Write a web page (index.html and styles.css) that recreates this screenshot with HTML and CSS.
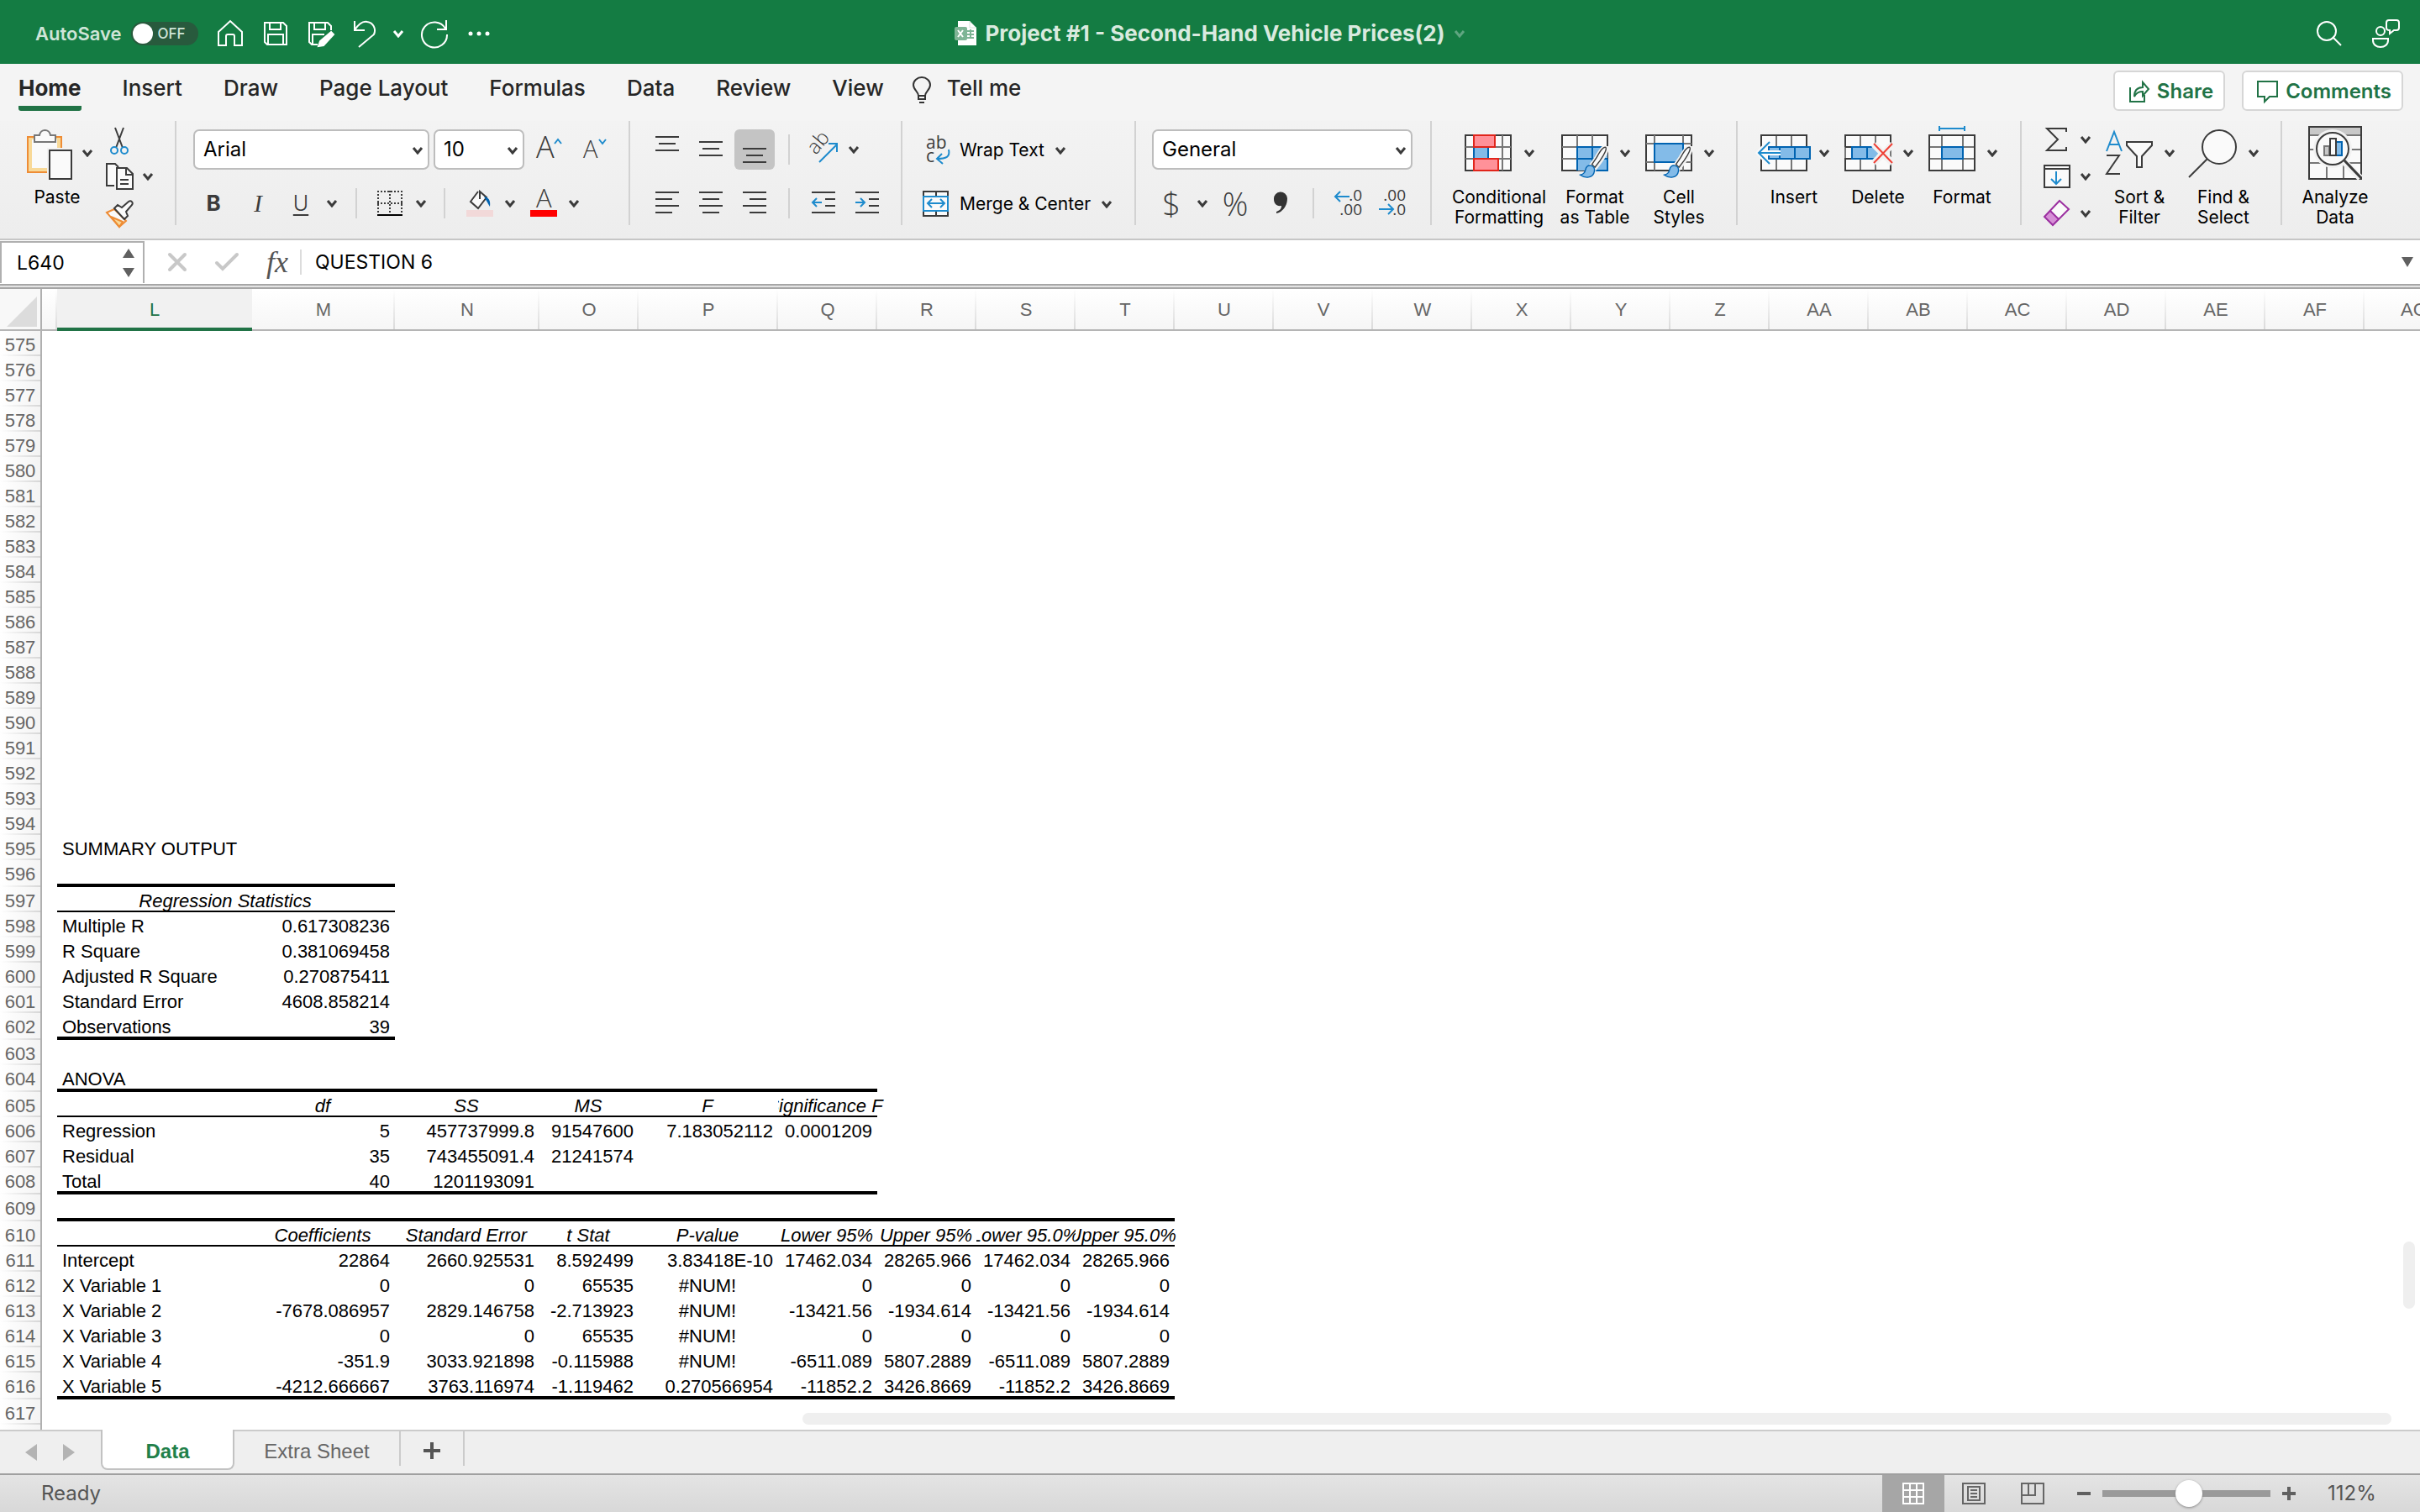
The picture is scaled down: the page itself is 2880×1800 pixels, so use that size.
FILE: index.html
```html
<!DOCTYPE html>
<html lang="en">
<head>
<meta charset="utf-8">
<meta name="viewport" content="width=device-width, initial-scale=1">
<title>Project #1 - Second-Hand Vehicle Prices(2)</title>
<link rel="stylesheet" href="styles.css">
</head>
<body>
<svg class="defs" aria-hidden="true">
  <symbol id="chev" viewBox="0 0 14 10"><path d="M2 2l5 6 5-6" fill="none" stroke="currentColor" stroke-width="3"/></symbol>
  <symbol id="brush" viewBox="0 0 48 60">
    <path d="M46 1c-3-2-9 6-16 18l-9 13 6 6 9-12C44 15 49 4 46 1z" fill="#fafafa" stroke="#f2f2f2" stroke-width="7"/>
    <path d="M45 2c-3-1-9 6-15 17l-8 12 5 5 9-12C43 14 48 4 45 2z" fill="#fafafa" stroke="#3b3b3b" stroke-width="2"/>
    <path d="M20 33c-5-1-8 2-9 7-1 6-4 8-9 9 8 6 22 6 24-6 1-5-1-9-6-10z" fill="#83bbe8" stroke="#0063b1" stroke-width="2"/>
  </symbol>
</svg>

<header class="titlebar">
  <div class="quick">
    <label class="autosave"><span>AutoSave</span><span class="toggle"><input type="checkbox" role="switch"><b>OFF</b></span></label>
    <button aria-label="Home"><svg width="32" height="32" viewBox="0 0 32 32"><path d="M2 14L16 1l14 13v16h-9V19c0-1-1-2-2-2h-6c-1 0-2 1-2 2v11H2z"/></svg></button>
    <button aria-label="Save"><svg width="32" height="32" viewBox="0 0 32 32"><path d="M3 3h22l4 4v22H6l-3-3zM9 3v8h13V3M7 29V17h18v12"/></svg></button>
    <button aria-label="Save as"><svg width="32" height="32" viewBox="0 0 32 32"><path d="M12 29H5l-3-3V3h22l4 4v5M8 3v8h13V3M6 29V17h14"/><path d="M28 14l3 3-12 13-6 1 2-6z" fill="#fff"/></svg></button>
    <button aria-label="Undo"><svg width="28" height="34" viewBox="0 0 28 34"><path d="M2 2v11h12M2 13C7 5 12 2 17 3c7 1 11 8 8 15L7 33"/></svg></button>
    <button class="more-undo" aria-label="Undo history"><svg width="14" height="10"><use href="#chev"/></svg></button>
    <button aria-label="Redo"><svg width="34" height="34" viewBox="0 0 34 34"><path d="M31 1v11H20M30 11A15 15 0 1 0 32 18"/></svg></button>
    <button aria-label="More"><svg width="28" height="8" viewBox="0 0 28 8"><g fill="#fff" stroke="none"><circle cx="4" cy="4" r="2.5"/><circle cx="14" cy="4" r="2.5"/><circle cx="24" cy="4" r="2.5"/></g></svg></button>
  </div>
  <button class="doc">
    <svg width="26" height="30" viewBox="0 0 26 30"><path d="M4 0h14l8 8v21H4z" fill="#fff" stroke="none"/><path d="M18 0v8h8" stroke="#d5e5da" stroke-width="1"/><path d="M15 12h8M15 16h8M15 20h8M19 10v11" stroke="#7fb596" stroke-width="2"/><rect y="7" width="15" height="16" rx="2" fill="#7fb596" stroke="none"/><path d="M4 11l6 8M10 11l-6 8" stroke="#fff"/></svg>
    <span>Project #1 - Second-Hand Vehicle Prices(2)</span>
    <svg class="dim" width="14" height="10"><use href="#chev"/></svg>
  </button>
  <div class="right">
    <button aria-label="Search"><svg width="32" height="32" viewBox="0 0 32 32"><circle cx="13" cy="13" r="11"/><path d="M20 20l10 10"/></svg></button>
    <button aria-label="Presence"><svg width="34" height="34" viewBox="0 0 34 34"><circle cx="11" cy="14" r="5"/><path d="M2 23h18v2c0 5-4 8-9 8s-9-3-9-8zM18 4c0-2 1-3 3-3h9c2 0 3 1 3 3v6c0 2-1 3-3 3h-3l-5 4v-4c-3 0-4-1-4-3z"/></svg></button>
  </div>
</header>

<nav class="tabs">
  <a href="#home" class="on">Home</a><a href="#insert">Insert</a><a href="#draw">Draw</a><a href="#layout">Page Layout</a><a href="#formulas">Formulas</a><a href="#data">Data</a><a href="#review">Review</a><a href="#view">View</a>
  <a href="#tell" class="tell"><svg width="24" height="32" viewBox="0 0 24 32"><path d="M8 23c0-5-6-7-6-13a10 9 0 0 1 20 0c0 6-6 8-6 13zM8 23v4h8v-4M9 31h6" fill="none" stroke="#333" stroke-width="2"/></svg>Tell me</a>
  <div class="actions">
    <button><svg width="26" height="28" viewBox="0 0 26 28"><path d="M2 9v17h17v-8M7 20c0-8 4-11 10-11V3l7 8-7 8v-5c-5 0-8 2-10 6z"/></svg>Share</button>
    <button><svg width="26" height="28" viewBox="0 0 26 28"><path d="M1 2h23v18H15l-6 6v-6H1z"/></svg>Comments</button>
  </div>
</nav>

<section class="ribbon" aria-label="Home tools">
  <div class="group clip">
    <button class="big"><span class="pic"><svg width="64" height="64" viewBox="0 0 64 64"><path d="M7 13h40v42H7z" fill="#f8d998" stroke="#ee8c35" stroke-width="2"/><path d="M12 16h30v34H12z" fill="#fafafa"/><path d="M15 19v-8h6c1-8 12-8 13 0h6v8z" fill="#fafafa" stroke="#777" stroke-width="2"/><path d="M30 26h32v38H30z" fill="#f2f2f2"/><path d="M33 29h26v34H33z" fill="#fafafa" stroke="#3b3b3b" stroke-width="2"/></svg><svg class="chev"><use href="#chev"/></svg></span>Paste</button>
    <div class="stack">
      <button aria-label="Cut"><svg width="36" height="36" viewBox="0 0 36 36"><path d="M13 4l9 24M23 4l-9 24" fill="none" stroke="#3b3b3b" stroke-width="2"/><g fill="none" stroke="#1e8bcd" stroke-width="2"><circle cx="12" cy="31" r="4"/><circle cx="24" cy="31" r="4"/></g></svg></button>
      <button aria-label="Copy"><svg width="36" height="36" viewBox="0 0 36 36"><g fill="#fafafa" stroke="#3b3b3b" stroke-width="2"><path d="M12 29H3V3h10l4 4"/><path d="M15 8h12l7 7v18H15z"/><path d="M26 8v8h8M19 22h10M19 27h10" fill="none"/></g></svg><svg class="chev"><use href="#chev"/></svg></button>
      <button aria-label="Format painter"><svg width="36" height="36" viewBox="0 0 36 36"><path d="M3 17l9-4 14 14-8 7z" fill="#fafafa" stroke="#ee8c35" stroke-width="2"/><path d="M8 22l14 6-4 6z" fill="#f8d998" stroke="#ee8c35" stroke-width="2"/><path d="M12 12l4-4 5 3 8-7c3-2 6 1 4 4l-7 8 2 5-4 4z" fill="#fafafa" stroke="#3b3b3b" stroke-width="2"/></svg></button>
    </div>
  </div>

  <div class="group font">
    <div class="row r1">
      <span class="drop family"><select aria-label="Font"><option>Arial</option></select><svg class="chev"><use href="#chev"/></svg></span>
      <span class="drop size"><select aria-label="Font size"><option>10</option></select><svg class="chev"><use href="#chev"/></svg></span>
      <button aria-label="Increase font size"><svg width="32" height="32" viewBox="0 0 32 32"><text x="0" y="26" font-size="36" class="glyph">A</text><path d="M22 9l4-5 4 5" fill="none" stroke="#1e8bcd" stroke-width="2"/></svg></button>
      <button aria-label="Decrease font size"><svg width="32" height="32" viewBox="0 0 32 32"><text x="2" y="26" font-size="29" class="glyph">A</text><path d="M21 4l4 5 4-5" fill="none" stroke="#1e8bcd" stroke-width="2"/></svg></button>
    </div>
    <div class="row r2">
      <button class="b">B</button><button class="i">I</button><button class="u">U</button><button aria-label="Underline style"><svg class="chev"><use href="#chev"/></svg></button><i class="sep"></i>
      <button aria-label="Borders"><svg width="32" height="32" viewBox="0 0 32 32"><path d="M1 2h30M1 16h30M2 1v28M30 1v28M16 1v28" fill="none" stroke="#3b3b3b" stroke-width="2" stroke-dasharray="2 2"/><path d="M1 30h30" stroke="#000" stroke-width="2"/></svg></button><button aria-label="Border style"><svg class="chev"><use href="#chev"/></svg></button><i class="sep"></i>
      <button aria-label="Fill color"><svg width="32" height="32" viewBox="0 0 32 32"><path d="M0 24h32v8H0z" fill="#f2d9d9"/><path d="M14 2L5 14l9 8 10-13-8-7v9" fill="#fafafa" stroke="#3b3b3b" stroke-width="2"/><path d="M21 8c6 1 8 5 7 12-3-5-4-7-7-12z" fill="#0063b1"/></svg></button><button aria-label="Fill colors"><svg class="chev"><use href="#chev"/></svg></button>
      <button aria-label="Font color"><svg width="32" height="32" viewBox="0 0 32 32"><text x="7" y="21" font-size="31" class="glyph">A</text><path d="M0 24h32v8H0z" fill="#f00"/></svg></button><button aria-label="Font colors"><svg class="chev"><use href="#chev"/></svg></button>
    </div>
  </div>

  <div class="group align">
    <div class="row r1">
      <button aria-label="Top align"><svg class="ln" viewBox="0 0 32 32"><path d="M2 1h28M6 9h20M2 17h28"/></svg></button>
      <button aria-label="Middle align"><svg class="ln" viewBox="0 0 32 32"><path d="M2 7h28M6 15h20M2 23h28"/></svg></button>
      <button aria-label="Bottom align" class="pressed"><svg class="ln" viewBox="0 0 32 32"><path d="M2 15h28M6 23h20M2 31h28"/></svg></button>
      <i class="sep"></i>
      <button aria-label="Orientation"><svg width="36" height="36" viewBox="0 0 36 36"><text x="9" y="25" font-size="24" class="glyph" transform="rotate(-50 9 25)">ab</text><path d="M13 33L34 12M24 11h10v10" fill="none" stroke="#1e8bcd" stroke-width="2"/></svg></button>
      <button aria-label="Orientation menu" class="nar"><svg class="chev"><use href="#chev"/></svg></button>
    </div>
    <div class="row r1">
      <button aria-label="Align left"><svg class="ln" viewBox="0 0 32 32"><path d="M2 3h28M2 11h20M2 19h28M2 27h20"/></svg></button>
      <button aria-label="Center"><svg class="ln" viewBox="0 0 32 32"><path d="M2 3h28M6 11h20M2 19h28M6 27h20"/></svg></button>
      <button aria-label="Align right"><svg class="ln" viewBox="0 0 32 32"><path d="M2 3h28M10 11h20M2 19h28M10 27h20"/></svg></button>
      <i class="sep"></i>
      <button aria-label="Decrease indent"><svg class="ln" viewBox="0 0 32 32"><path d="M2 3h28M18 11h12M18 19h12M2 27h28"/><path d="M14 15H3M8 10l-5 5 5 5" stroke="#1e8bcd"/></svg></button>
      <button aria-label="Increase indent"><svg class="ln" viewBox="0 0 32 32"><path d="M2 3h28M18 11h12M18 19h12M2 27h28"/><path d="M2 15h11M8 10l5 5-5 5" stroke="#1e8bcd"/></svg></button>
    </div>
  </div>

  <div class="group merge">
    <button class="row text"><svg width="32" height="32" viewBox="0 0 32 32"><text x="4" y="14" font-size="21" class="dec">ab</text><text x="4" y="30" font-size="21" class="dec">c</text><path d="M31 15c2 9-3 11-14 11M23 20l-6 6 7 6" fill="none" stroke="#1e8bcd" stroke-width="2"/></svg>Wrap Text<svg class="chev"><use href="#chev"/></svg></button>
    <button class="row text"><svg width="32" height="32" viewBox="0 0 32 32"><path d="M1 1h29v29H1zM16 1v6M16 24v6" fill="#fafafa" stroke="#3b3b3b" stroke-width="2"/><path d="M1 7h29v17H1zM6 15h20M11 10l-5 5 5 5M21 10l5 5-5 5" fill="#fafafa" stroke="#1e8bcd" stroke-width="2"/></svg>Merge &amp; Center<svg class="chev"><use href="#chev"/></svg></button>
  </div>

  <div class="group number">
    <div class="row"><span class="drop format"><select aria-label="Number format"><option>General</option></select><svg class="chev"><use href="#chev"/></svg></span></div>
    <div class="row r2">
      <button class="sym">$</button><button aria-label="Currencies"><svg class="chev"><use href="#chev"/></svg></button><button class="sym">%</button>
      <button aria-label="Comma style"><svg width="18" height="28" viewBox="0 0 18 28"><path d="M1 9a8 8 0 0 1 16-1c0 9-5 16-13 18v-2c5-2 6-4 6-7C4 18 1 14 1 9z" fill="#333"/></svg></button><i class="sep"></i>
      <button aria-label="Increase decimal"><svg width="36" height="36" viewBox="0 0 36 36"><text x="35" y="15" font-size="19" text-anchor="end" class="dec">.0</text><text x="35" y="32" font-size="19" text-anchor="end" class="dec">.00</text><path d="M20 10H3M9 4l-6 6 6 6" fill="none" stroke="#1e8bcd" stroke-width="2"/></svg></button>
      <button aria-label="Decrease decimal"><svg width="36" height="36" viewBox="0 0 36 36"><text x="35" y="15" font-size="19" text-anchor="end" class="dec">.00</text><text x="35" y="32" font-size="19" text-anchor="end" class="dec">.0</text><path d="M3 25h17M14 19l6 6-6 6" fill="none" stroke="#1e8bcd" stroke-width="2"/></svg></button>
    </div>
  </div>

  <div class="group styles">
    <button class="big cond"><span class="pic"><svg width="64" height="64" viewBox="0 0 64 64"><path d="M2 11h54v42H2z" fill="#fafafa" stroke="#3b3b3b" stroke-width="2"/><path d="M2 25h54M2 39h54M12 11v42M46 11v42" stroke="#777" stroke-width="2"/><path d="M12 25h17v14H12z" fill="#83bbe8" stroke="#0063b1" stroke-width="2"/><path d="M12 11h25v14H12zM12 39h29v14H12z" fill="#ff9199" stroke="#e1251b" stroke-width="2"/><path d="M30 26h15v12H30z" fill="#fafafa"/></svg><svg class="chev"><use href="#chev"/></svg></span>Conditional<br>Formatting</button>
    <button class="big fat"><span class="pic"><svg width="64" height="64" viewBox="0 0 64 64"><path d="M3 11h54v42H3z" fill="#fafafa" stroke="#3b3b3b" stroke-width="2"/><path d="M21 25h36v28H21z" fill="#83bbe8"/><path d="M3 25h18M3 39h18M21 11v14M39 11v14" stroke="#777" stroke-width="2"/><path d="M21 53V25h36M21 39h36M39 25v28M57 39v14H40" fill="none" stroke="#0063b1" stroke-width="2"/><use href="#brush" x="16" y="24" width="48" height="42"/></svg><svg class="chev"><use href="#chev"/></svg></span>Format<br>as Table</button>
    <button class="big cell"><span class="pic"><svg width="64" height="64" viewBox="0 0 64 64"><path d="M3 11h54v42H3z" fill="#fafafa" stroke="#3b3b3b" stroke-width="2"/><path d="M3 21h54M3 43h54M13 11v42M47 11v42" stroke="#777" stroke-width="2"/><path d="M13 21h34v22H13z" fill="#83bbe8" stroke="#0063b1" stroke-width="2"/><use href="#brush" x="16" y="24" width="48" height="42"/></svg><svg class="chev"><use href="#chev"/></svg></span>Cell<br>Styles</button>
  </div>

  <div class="group cells">
    <button class="big"><span class="pic"><svg width="64" height="64" viewBox="0 0 64 64"><path d="M3 11h54v42H3zM21 11v42M39 11v42" fill="#fafafa" stroke="#777" stroke-width="2"/><path d="M3 24V11h54v13M3 40v13h54V40" fill="none" stroke="#3b3b3b" stroke-width="2"/><path d="M12 25h49v14H12z" fill="#83bbe8" stroke="#0063b1" stroke-width="2"/><path d="M25 25v14M43 25v14" stroke="#0063b1" stroke-width="2"/><path d="M26 32H2M13 18L0 32l13 14" fill="none" stroke="#fafafa" stroke-width="6"/><path d="M26 32H1M13 19L0 32l13 13" fill="none" stroke="#1e8bcd" stroke-width="2"/></svg><svg class="chev"><use href="#chev"/></svg></span>Insert</button>
    <button class="big"><span class="pic"><svg width="64" height="64" viewBox="0 0 64 64"><path d="M3 11h54v42H3zM21 11v42M39 11v42" fill="#fafafa" stroke="#777" stroke-width="2"/><path d="M3 25V11h54v8M10 25H3M10 39H3v14h54v-6" fill="none" stroke="#3b3b3b" stroke-width="2"/><path d="M11 25h26l6 7-6 7H11z" fill="#83bbe8"/><path d="M38 25H11v14h27M29 25v14" fill="none" stroke="#0063b1" stroke-width="2"/><path d="M37 22l22 22M59 22L37 44" stroke="#f2f2f2" stroke-width="8"/><path d="M37 21l22 23M59 21L37 44" stroke="#ef4136" stroke-width="2"/></svg><svg class="chev"><use href="#chev"/></svg></span>Delete</button>
    <button class="big"><span class="pic"><svg width="64" height="64" viewBox="0 0 64 64"><path d="M3 11h54v42H3z" fill="#fafafa" stroke="#3b3b3b" stroke-width="2"/><path d="M4 25h52M4 39h52M18 12v40M43 12v40" stroke="#777" stroke-width="2"/><path d="M18 25h25v14H18z" fill="#83bbe8" stroke="#0063b1" stroke-width="2"/><path d="M15 3h30M15 0v6M45 0v6" stroke="#1e8bcd" stroke-width="2"/></svg><svg class="chev"><use href="#chev"/></svg></span>Format</button>
  </div>

  <div class="group edit">
    <div class="stack">
      <button aria-label="AutoSum"><svg width="36" height="36" viewBox="0 0 36 36"><path d="M29 9V5H6l13 13L6 31h23v-4" fill="none" stroke="#3b3b3b" stroke-width="2"/></svg><svg class="chev"><use href="#chev"/></svg></button>
      <button aria-label="Fill"><svg width="36" height="36" viewBox="0 0 36 36"><path d="M3 5h30v26H3zM3 9h30" fill="#fafafa" stroke="#3b3b3b" stroke-width="2"/><path d="M17 12v15M11 21l6 6 6-6" fill="none" stroke="#1e8bcd" stroke-width="2"/></svg><svg class="chev"><use href="#chev"/></svg></button>
      <button aria-label="Clear"><svg width="36" height="36" viewBox="0 0 36 36"><path d="M21 3l11 10-19 19L3 22z" fill="#fafafa"/><path d="M10 15l11 10-8 7L3 22z" fill="#d68fd6"/><path d="M21 3l11 10-19 19L3 22zM10 15l10 10" fill="none" stroke="#9b2fa0" stroke-width="2"/></svg><svg class="chev"><use href="#chev"/></svg></button>
    </div>
    <button class="big"><span class="pic"><svg width="64" height="64" viewBox="0 0 64 64"><path d="M3 30L12 7l9 23M6 22h12" fill="none" stroke="#1e8bcd" stroke-width="2"/><path d="M3 35h15L3 57h16" fill="none" stroke="#3b3b3b" stroke-width="2"/><path d="M27 19h30v4L45 36v13h-6V36L27 23z" fill="#fafafa" stroke="#3b3b3b" stroke-width="2"/></svg><svg class="chev"><use href="#chev"/></svg></span>Sort &amp;<br>Filter</button>
    <button class="big"><span class="pic"><svg width="64" height="64" viewBox="0 0 64 64"><circle cx="37" cy="25" r="20" fill="#fafafa" stroke="#3b3b3b" stroke-width="2"/><path d="M23 39L1 61" stroke="#3b3b3b" stroke-width="2"/></svg><svg class="chev"><use href="#chev"/></svg></span>Find &amp;<br>Select</button>
  </div>

  <div class="group analyze">
    <button class="big"><span class="pic"><svg width="64" height="64" viewBox="0 0 64 64"><path d="M1 1h62v62H1z" fill="#fafafa"/><path d="M2 2h60v8H2z" fill="#c8c8c8"/><path d="M1 11h62M1 28h62M1 44h62M22 44v19M42 44v19" stroke="#777" stroke-width="2"/><path d="M1 1h62v62H1z" fill="none" stroke="#3b3b3b" stroke-width="2"/><circle cx="29" cy="27" r="23" fill="#f2f2f2"/><path d="M42 42l20 20" stroke="#f2f2f2" stroke-width="8"/><circle cx="29" cy="27" r="19" fill="#fafafa" stroke="#3b3b3b" stroke-width="2"/><path d="M43 41l20 21" stroke="#3b3b3b" stroke-width="3"/><path d="M19 24h6v11h-6z" fill="#c8c8c8" stroke="#777" stroke-width="2"/><path d="M33 19h7v16h-7z" fill="#83bbe8" stroke="#0063b1" stroke-width="2"/><path d="M26 15h7v20h-7z" fill="#fafafa" stroke="#3b3b3b" stroke-width="2"/></svg></span>Analyze<br>Data</button>
  </div>
</section>

<div class="formula">
  <div class="namebox"><input aria-label="Name box" value="L640"><svg width="14" height="34" viewBox="0 0 14 34"><path d="M7 0l7 11H0zM7 34l7-11H0z" fill="#606060"/></svg></div>
  <button aria-label="Cancel"><svg width="22" height="22" viewBox="0 0 22 22"><path d="M2 2l18 18M20 2L2 20" stroke="#c8c8c8" stroke-width="4" stroke-linecap="round"/></svg></button>
  <button aria-label="Enter"><svg width="30" height="24" viewBox="0 0 30 24"><path d="M3 13l7 7L27 3" fill="none" stroke="#c8c8c8" stroke-width="4" stroke-linecap="round"/></svg></button>
  <button class="fx">fx</button>
  <input class="content" aria-label="Formula bar" value="QUESTION 6">
  <button aria-label="Expand formula bar"><svg width="14" height="12" viewBox="0 0 14 12"><path d="M0 0h14L7 12z" fill="#606060"/></svg></button>
</div>

<main class="sheet">
<table>
<colgroup><col class="w50"><col class="w18"><col class="w232"><col class="w170"><col class="w172"><col class="w118"><col class="w166"><col class="w118" span="17"></colgroup>
<thead><tr><th class="corner"><svg width="36" height="36" viewBox="0 0 36 36"><path d="M36 0v36H0z" fill="#dcdcdc"/></svg></th><th></th><th class="sel">L</th><th>M</th><th>N</th><th>O</th><th>P</th><th>Q</th><th>R</th><th>S</th><th>T</th><th>U</th><th>V</th><th>W</th><th>X</th><th>Y</th><th>Z</th><th>AA</th><th>AB</th><th>AC</th><th>AD</th><th>AE</th><th>AF</th><th>AG</th></tr></thead>
<tbody>
<tr><th>575</th></tr><tr><th>576</th></tr><tr><th>577</th></tr><tr><th>578</th></tr><tr><th>579</th></tr>
<tr><th>580</th></tr><tr><th>581</th></tr><tr><th>582</th></tr><tr><th>583</th></tr><tr><th>584</th></tr>
<tr><th>585</th></tr><tr><th>586</th></tr><tr><th>587</th></tr><tr><th>588</th></tr><tr><th>589</th></tr>
<tr><th>590</th></tr><tr><th>591</th></tr><tr><th>592</th></tr><tr><th>593</th></tr><tr><th>594</th></tr>
<tr><th>595</th><td></td><td>SUMMARY OUTPUT</td></tr>
<tr class="thick"><th>596</th><td></td><td></td><td></td></tr>
<tr class="thin"><th>597</th><td></td><td colspan="2">Regression Statistics</td></tr>
<tr><th>598</th><td></td><td>Multiple R</td><td>0.617308236</td></tr>
<tr><th>599</th><td></td><td>R Square</td><td>0.381069458</td></tr>
<tr><th>600</th><td></td><td>Adjusted R Square</td><td>0.270875411</td></tr>
<tr><th>601</th><td></td><td>Standard Error</td><td>4608.858214</td></tr>
<tr class="thick"><th>602</th><td></td><td>Observations</td><td>39</td></tr>
<tr><th>603</th></tr>
<tr class="thick"><th>604</th><td></td><td>ANOVA</td><td></td><td></td><td></td><td></td><td></td></tr>
<tr class="thin"><th>605</th><td></td><td></td><td>df</td><td>SS</td><td>MS</td><td>F</td><td><span class="fit spill">Significance F</span></td></tr>
<tr><th>606</th><td></td><td>Regression</td><td>5</td><td>457737999.8</td><td>91547600</td><td>7.183052112</td><td>0.0001209</td></tr>
<tr><th>607</th><td></td><td>Residual</td><td>35</td><td>743455091.4</td><td>21241574</td></tr>
<tr class="thick"><th>608</th><td></td><td>Total</td><td>40</td><td>1201193091</td><td></td><td></td><td></td></tr>
<tr class="thick"><th>609</th><td></td><td></td><td></td><td></td><td></td><td></td><td></td><td></td><td></td><td></td></tr>
<tr class="thin"><th>610</th><td></td><td></td><td>Coefficients</td><td>Standard Error</td><td>t Stat</td><td>P-value</td><td>Lower 95%</td><td>Upper 95%</td><td><span class="fit">Lower 95.0%</span></td><td><span class="fit spill">Upper 95.0%</span></td></tr>
<tr><th>611</th><td></td><td>Intercept</td><td>22864</td><td>2660.925531</td><td>8.592499</td><td>3.83418E-10</td><td>17462.034</td><td>28265.966</td><td>17462.034</td><td>28265.966</td></tr>
<tr><th>612</th><td></td><td>X Variable 1</td><td>0</td><td>0</td><td>65535</td><td class="err">#NUM!</td><td>0</td><td>0</td><td>0</td><td>0</td></tr>
<tr><th>613</th><td></td><td>X Variable 2</td><td>-7678.086957</td><td>2829.146758</td><td>-2.713923</td><td class="err">#NUM!</td><td>-13421.56</td><td>-1934.614</td><td>-13421.56</td><td>-1934.614</td></tr>
<tr><th>614</th><td></td><td>X Variable 3</td><td>0</td><td>0</td><td>65535</td><td class="err">#NUM!</td><td>0</td><td>0</td><td>0</td><td>0</td></tr>
<tr><th>615</th><td></td><td>X Variable 4</td><td>-351.9</td><td>3033.921898</td><td>-0.115988</td><td class="err">#NUM!</td><td>-6511.089</td><td>5807.2889</td><td>-6511.089</td><td>5807.2889</td></tr>
<tr class="thick"><th>616</th><td></td><td>X Variable 5</td><td>-4212.666667</td><td>3763.116974</td><td>-1.119462</td><td>0.270566954</td><td>-11852.2</td><td>3426.8669</td><td>-11852.2</td><td>3426.8669</td></tr>
<tr><th>617</th></tr><tr><th></th></tr>
</tbody>
</table>
<div class="hbar"></div><div class="vbar"></div>
</main>

<nav class="sheets">
  <button aria-label="Previous sheet"><svg width="14" height="20" viewBox="0 0 14 20"><path d="M14 0v20L0 10z" fill="#b3b3b3"/></svg></button>
  <button aria-label="Next sheet"><svg width="14" height="20" viewBox="0 0 14 20"><path d="M0 0v20l14-10z" fill="#b3b3b3"/></svg></button>
  <a href="#data-sheet" class="cur">Data</a>
  <a href="#extra" class="other">Extra Sheet</a>
  <button class="add" aria-label="Add sheet"><svg width="20" height="20" viewBox="0 0 20 20"><path d="M10 0v20M0 10h20" stroke="#555" stroke-width="4"/></svg></button>
</nav>

<footer class="status">
  <span class="ready">Ready</span>
  <button class="view on" aria-label="Normal view"><svg width="26" height="26" viewBox="0 0 26 26"><path d="M1 1h24v24H1zM1 9h24M1 17h24M9 1v24M17 1v24" fill="none" stroke="#fff" stroke-width="2"/></svg></button>
  <button class="view" aria-label="Page layout view"><svg width="28" height="26" viewBox="0 0 28 26"><path d="M1 1h26v24H1zM7 5h14v16H7zM10 9h8M10 13h8M10 17h8" fill="none" stroke="#666" stroke-width="2"/></svg></button>
  <button class="view" aria-label="Page break preview"><svg width="28" height="26" viewBox="0 0 28 26"><path d="M1 1h26v24H1zM9 1v14M17 1v14M1 15h17" fill="none" stroke="#666" stroke-width="2"/></svg></button>
  <button class="step" aria-label="Zoom out"><svg width="16" height="16" viewBox="0 0 16 16"><path d="M0 8h16" stroke="#606060" stroke-width="4"/></svg></button>
  <input type="range" aria-label="Zoom" min="0" max="100" value="52">
  <button class="step" aria-label="Zoom in"><svg width="16" height="16" viewBox="0 0 16 16"><path d="M0 8h16M8 0v16" stroke="#606060" stroke-width="4"/></svg></button>
  <span class="pct">112%</span>
</footer>
</body>
</html>
```
FILE: styles.css
```css
* { box-sizing: border-box; }
body { margin: 0; height: 100vh; display: flex; flex-direction: column; overflow: hidden; background: #fff; color: #262626; font: 24px/28px Inter, "Liberation Sans", sans-serif; }
button, input, select { font: inherit; color: inherit; border: 0; padding: 0; margin: 0; background: none; border-radius: 0; }
a { color: inherit; text-decoration: none; }
svg { display: block; flex: none; overflow: visible; }
.defs { position: absolute; width: 0; height: 0; }
.chev { width: 14px; height: 10px; color: #3b3b3b; }
.glyph { font-family: "Open Sans", sans-serif; font-weight: 300; fill: #3b3b3b; }
.dec { font-family: "Open Sans", sans-serif; fill: #3b3b3b; }

/* title bar */
.titlebar { flex: none; height: 76px; display: grid; grid-template-columns: 1fr auto 1fr; align-items: center; background: #147c43; color: #fff; }
.titlebar svg { fill: none; stroke: #fff; stroke-width: 2; }
.quick { display: flex; align-items: center; gap: 22px; padding: 4px 0 0 42px; }
.autosave { display: flex; align-items: center; gap: 11px; font-size: 22px; font-weight: 600; color: #cfe5d8; }
.toggle { display: flex; align-items: center; width: 80px; height: 28px; padding: 2px; border-radius: 14px; background: #285a3d; }
.toggle input { appearance: none; width: 24px; height: 24px; border-radius: 12px; background: #fff; }
.toggle b { margin-left: 6px; font-size: 17px; font-weight: 500; }
.more-undo { margin: 0 -3px; }
.doc { display: flex; align-items: center; gap: 10px; padding-top: 4px; font-size: 26px; font-weight: 700; color: #d9eadf; }
.doc .dim { color: #5fa580; }
.right { display: flex; justify-content: flex-end; gap: 34px; padding: 4px 24px 0 0; }

/* ribbon tabs */
.tabs { flex: none; height: 68px; display: flex; gap: 49px; padding: 0 20px 0 22px; background: #f4f4f4; font-size: 26px; font-weight: 500; }
.tabs > a { height: 56px; padding-top: 15px; }
.tabs .on { font-weight: 700; border-bottom: 6px solid #217346; border-radius: 0 0 3px 3px; }
.tabs .tell { display: flex; gap: 18px; margin-left: -16px; }
.actions { display: flex; gap: 20px; margin-left: auto; padding-top: 8px; }
.actions button { display: flex; align-items: center; gap: 8px; height: 48px; padding: 2px 12px 0 16px; border: 2px solid #d6d6d6; border-radius: 6px; background: #fff; color: #217346; font-size: 24px; font-weight: 600; }
.actions svg { fill: none; stroke: #217346; stroke-width: 2; }

/* ribbon */
.ribbon { flex: none; height: 142px; display: flex; overflow: hidden; background: linear-gradient(#f3f3f3, #ededed); border-bottom: 2px solid #c6c6c6; color: #000; font-size: 21px; line-height: 24px; }
.group { flex: none; height: 124px; border-right: 2px solid #d2d2d2; }
.group:last-child { border: 0; }
.clip, .styles, .cells, .edit, .analyze { display: flex; }
.font, .align, .merge, .number { display: flex; flex-direction: column; gap: 16px; padding-top: 10px; }
.clip { width: 210px; padding-left: 18px; gap: 6px; }
.font { width: 540px; padding-left: 20px; }
.align { width: 324px; padding-left: 18px; }
.merge { width: 278px; padding-left: 24px; }
.number { width: 352px; padding-left: 19px; }
.styles { width: 364px; padding-left: 18px; }
.cells { width: 338px; padding-left: 17px; }
.edit { width: 310px; padding-left: 24px; }
.analyze { padding-left: 13px; }
.big { width: 100px; height: 131px; padding-top: 6px; display: flex; flex-direction: column; align-items: center; white-space: nowrap; }
.big.cond { width: 124px; }
.big.fat { width: 104px; }
.big.cell { width: 96px; }
.pic { display: flex; align-items: center; gap: 7px; height: 64px; margin-bottom: 9px; }
.stack { width: 66px; }
.stack button { display: flex; align-items: center; gap: 9px; height: 44px; }
.row { display: grid; height: 48px; align-items: center; justify-content: start; justify-items: center; }
.row button { display: flex; align-items: center; justify-content: center; height: 48px; }
.font .r1 { grid-template-columns: 286px 108px 60px 48px; }
.font .r2 { grid-template-columns: 48px 58px 44px 30px 28px 52px 22px 34px 50px 22px 58px 14px; }
.align .r1 { grid-template-columns: 52px 52px 52px 30px 52px 52px; }
.number .r2 { grid-template-columns: 46px 28px 50px 58px 20px 62px 42px; }
.ln { width: 32px; height: 32px; fill: none; stroke: #3b3b3b; stroke-width: 2; }
.sep { width: 2px; height: 36px; background: #d2d2d2; }
.row .pressed { width: 48px; border-radius: 6px; background: #c4c4c4; }
.nar { justify-self: start; padding-left: 3px; }
.b, .i, .u, .sym { color: #3b3b3b; }
.b { font-size: 26px; font-weight: 700; }
.i { font: italic 29px/32px "Liberation Serif", serif; }
.u { font-size: 25px; font-weight: 300; text-decoration: underline; text-underline-offset: 4px; }
.sym { font: 300 38px/40px "Open Sans", sans-serif; }
.text { display: flex; gap: 12px; font-size: 21px; padding-top: 1px; }
.drop { position: relative; height: 48px; }
.drop select { appearance: none; width: 100%; height: 48px; padding: 0 10px; border: 2px solid #bdbdbd; border-radius: 7px; background: #fff; font-size: 24px; }
.drop .chev { position: absolute; right: 7px; top: 20px; }
.family { width: 281px; justify-self: start; }
.size { width: 108px; }
.format { width: 310px; }

/* formula bar */
.formula { flex: none; height: 58px; display: flex; align-items: center; padding: 0 8px 6px 0; background: linear-gradient(#fff 52px, #a6a6a6 52px, #a6a6a6 54px, #ededed 54px, #dcdcdc 56px, #a6a6a6 56px); color: #000; font-size: 23px; }
.namebox { width: 172px; height: 50px; display: flex; align-items: center; padding: 0 10px 0 18px; border: solid #b0b0b0; border-width: 2px 2px 0; }
.namebox input { flex: 1; min-width: 0; }
.formula > button:nth-of-type(1) { margin-left: 28px; }
.formula > button:nth-of-type(2) { margin-left: 33px; }
.fx { margin: 0 14px 0 32px; color: #555; font: italic 36px/36px "Liberation Serif", serif; }
.content { flex: 1; height: 30px; padding-left: 16px; border-left: 2px solid #dcdcdc; }

/* grid */
.sheet { flex: 1; min-height: 0; overflow: hidden; position: relative; background: linear-gradient(90deg, #fff, #f4f4f4 48px, #b0b0b0 48px, #b0b0b0 50px, #fff 50px); font: 22px/23px "Liberation Sans", Arial, sans-serif; color: #000; }
table { table-layout: fixed; width: 2932px; border-collapse: separate; border-spacing: 0; }
.w50 { width: 50px; } .w18 { width: 18px; } .w232 { width: 232px; } .w170 { width: 170px; } .w172 { width: 172px; } .w118 { width: 118px; } .w166 { width: 166px; }
th { font-weight: 400; color: #666; padding: 0; }
thead th { height: 50px; padding: 1px 0 0; border-bottom: 2px solid #b5b5b5; background: linear-gradient(#fff, #dadada) right / 2px 100% no-repeat, linear-gradient(#fff, #f6f6f6); }
thead .sel { color: #217346; border-bottom: 4px solid #217346; background: #f1f1f1; padding-top: 3px; }
thead .corner { border-right: 2px solid #b0b0b0; background: #f8f8f8; }
.corner svg { margin: 4px 0 0 8px; }
tbody tr { height: 30px; }
tbody .thick { height: 32px; }
tbody th { vertical-align: top; padding: 5px 0 0; border-right: 2px solid #b0b0b0; background: linear-gradient(90deg, #fff, #d6d6d6) bottom / 100% 2px no-repeat, linear-gradient(90deg, #fff, #f4f4f4); }
td { vertical-align: top; padding: 5px 6px 0; text-align: right; white-space: nowrap; }
td:nth-child(3) { text-align: left; }
.thick td + td { border-bottom: 4px solid #000; }
.thin td { padding: 5px 2px 0 0; text-align: center; font-style: italic; }
.thin td:nth-child(3) { text-align: center; }
.thin td + td { border-bottom: 2px solid #000; }
td.err { padding: 5px 2px 0 0; text-align: center; }
.fit { display: flex; justify-content: center; overflow: hidden; margin-right: -2px; padding-right: 2px; }
.spill { overflow: visible; padding-right: 7px; clip-path: inset(0 -10px 0 0); }
.hbar { position: absolute; left: 955px; right: 34px; bottom: 6px; height: 14px; border-radius: 7px; background: #efefef; }
.vbar { position: absolute; right: 6px; bottom: 144px; width: 14px; height: 80px; border-radius: 7px; background: #efefef; }

/* sheet tabs */
.sheets { flex: none; height: 52px; display: flex; align-items: flex-start; padding-left: 30px; background: #efefef; border-top: 2px solid #cbcbcb; font: 24px/48px "Liberation Sans", Arial, sans-serif; color: #666; }
.sheets > button { height: 50px; display: flex; align-items: center; margin-right: 31px; }
.cur { width: 159px; height: 48px; margin-top: -2px; padding-top: 2px; text-align: center; background: #fff; border: solid #c2c2c2; border-width: 0 2px 2px; border-radius: 0 0 8px 8px; color: #21804a; font-weight: 700; }
.other { width: 198px; height: 41px; text-align: center; border-right: 2px solid #cbcbcb; }
.sheets > .add { width: 76px; height: 41px; margin: 0; padding-top: 4px; justify-content: center; border-right: 2px solid #cbcbcb; }

/* status bar */
.status { flex: none; height: 46px; display: flex; align-items: center; padding-right: 46px; border-top: 2px solid #a0a0a0; background: linear-gradient(#e4e4e4, #d8d8d8); color: #555; }
.ready { margin: 0 auto 0 49px; }
.view { width: 70px; height: 44px; display: flex; justify-content: center; align-items: center; }
.view.on { width: 74px; background: #a6a6a6; }
.step { width: 16px; }
.view + .step { margin-left: 18px; }
input[type="range"] { appearance: none; width: 200px; height: 32px; margin: 0 14px; background: linear-gradient(#9a9a9a, #9a9a9a) center / 100% 8px no-repeat; }
input[type="range"]::-webkit-slider-thumb { appearance: none; width: 32px; height: 32px; border-radius: 16px; background: #fff; box-shadow: 0 1px 3px #888; }
.pct { width: 64px; margin-left: 38px; }
```
